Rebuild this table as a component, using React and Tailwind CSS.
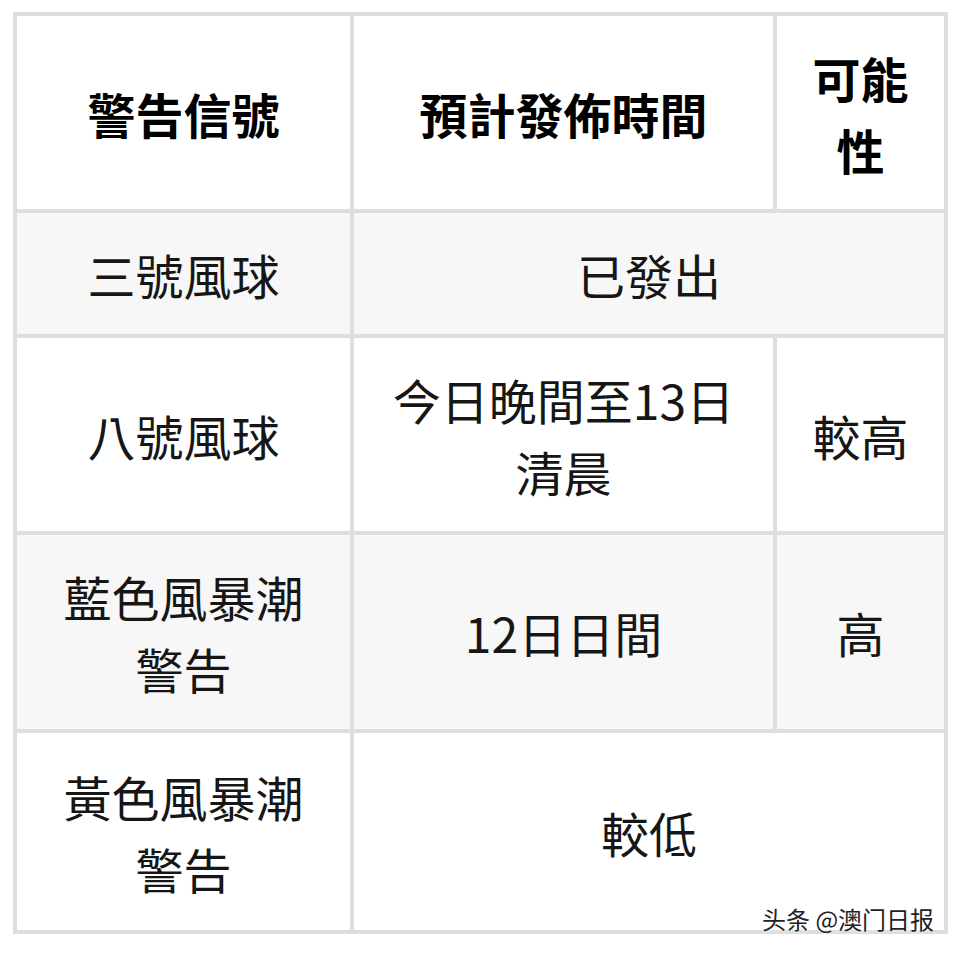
import React from 'react'

const font = { fontFamily: '"Noto Sans CJK TC", "Noto Sans CJK SC", sans-serif' }

function Cell({ children, gray, bold, span }) {
    return (
        <div
            className={`flex items-center justify-center text-center px-[30px] leading-[1.5] ${
                gray ? 'bg-[#f7f7f7]' : 'bg-white'
            } ${bold ? 'font-bold text-black' : 'text-[#161616]'} ${span ? 'col-span-2' : ''}`}
        >
            <span>{children}</span>
        </div>
    )
}

export default function App() {
    return (
        <div className="relative w-[960px] h-[957px] bg-white overflow-hidden" style={font}>
            <div className="ml-[13px] mt-[12px] w-[935px] grid grid-cols-[333px_419px_167px] grid-rows-[193px_121px_193px_194px_197px] gap-[4px] p-[4px] bg-[#dedede] text-[48px]">
                <Cell bold>警告信號</Cell>
                <Cell bold>預計發佈時間</Cell>
                <Cell bold>可能<br />性</Cell>

                <Cell gray>三號風球</Cell>
                <Cell gray span>已發出</Cell>

                <Cell>八號風球</Cell>
                <Cell>今日晚間至13日<br />清晨</Cell>
                <Cell>較高</Cell>

                <Cell gray>藍色風暴潮<br />警告</Cell>
                <Cell gray>12日日間</Cell>
                <Cell gray>高</Cell>

                <Cell>黃色風暴潮<br />警告</Cell>
                <Cell span>較低</Cell>
            </div>
            <div
                className="absolute left-[762px] top-[905px] text-[24px] leading-[1.2] text-[#222] whitespace-nowrap"
                style={{ fontFamily: '"Noto Sans CJK SC", sans-serif', textShadow: '0 0 2px #fff, 0 0 2px #fff' }}
            >
                头条 @澳门日报
            </div>
        </div>
    )
}
